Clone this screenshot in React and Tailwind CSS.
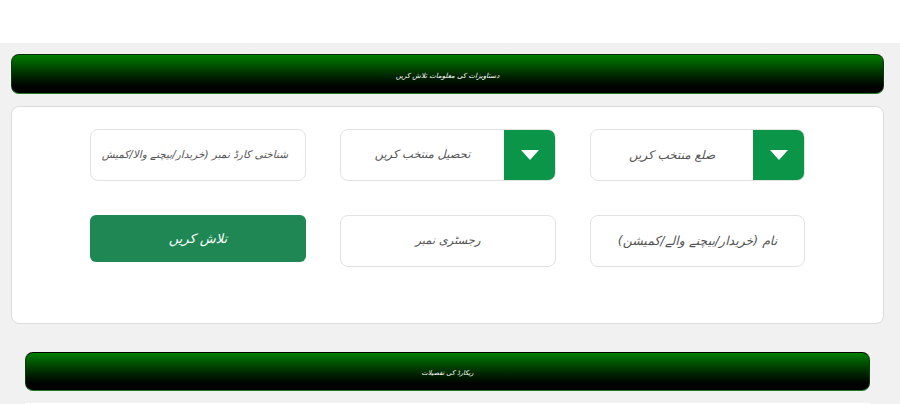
const font = { fontFamily: '"DejaVu Sans", sans-serif' };

function Bar({ children, className }) {
  return (
    <div className={`flex items-center justify-center rounded-lg border border-x-[#0b3d0b] border-b-[#1f7a2a] bg-gradient-to-b from-[#008000] to-black pt-1 italic text-white ${className}`}>
      {children}
    </div>
  );
}

function Select({ label, size }) {
  return (
    <div className="flex h-[52px] overflow-hidden rounded-lg border border-[#e2e2e2] bg-white">
      <div className={`flex flex-1 items-center justify-center italic text-[#555] ${size}`}>{label}</div>
      <div className="flex w-[51px] items-center justify-center bg-[#0a9548]">
        <div className="h-0 w-0 border-x-[9px] border-t-[10px] border-x-transparent border-t-white" />
      </div>
    </div>
  );
}

function Field({ label, size }) {
  return (
    <div className={`flex h-[52px] items-center justify-center overflow-hidden whitespace-nowrap rounded-lg border border-[#e2e2e2] bg-white italic text-[#555] ${size}`}>
      {label}
    </div>
  );
}

export default function App() {
  return (
    <div className="h-[404px] overflow-hidden bg-white" style={font}>
      <div className="mt-[43px] h-[361px] bg-[#f1f1f1] pl-[11px] pr-4 pt-[11px]">
        <Bar className="h-10 border-t-[#0a2a0a] text-[7px]">دستاویزات کی معلومات تلاش کریں</Bar>
        <div className="mt-3 h-[218px] rounded-lg border border-[#dcdcdc] bg-white px-[78px] pt-[22px]">
          <div className="grid grid-cols-[216px_216px_215px] items-start justify-between gap-y-[34px]">
            <div dir="rtl" className="flex h-[52px] items-center whitespace-nowrap rounded-lg border border-[#e2e2e2] bg-white px-[17px] text-[10.5px] italic text-[#555]">
              شناختی کارڈ نمبر (خریدار/بیچنے والا/کمیش
            </div>
            <Select label="تحصیل منتخب کریں" size="text-[11.5px]" />
            <Select label="ضلع منتخب کریں" size="text-[12px]" />
            <button className="flex h-[47px] items-center justify-center rounded-md bg-[#1e8753] text-[13px] italic text-white">تلاش کریں</button>
            <Field label="رجسٹری نمبر" size="text-[11.5px]" />
            <Field label="نام (خریدار/بیچنے والے/کمیشن)" size="text-[12.5px]" />
          </div>
        </div>
        <div className="px-[14px]">
          <Bar className="mt-7 h-[39px] border-t-black text-[6.5px]">ریکارڈ کی تفصیلات</Bar>
          <div className="mt-3 h-8 bg-white" />
        </div>
      </div>
    </div>
  );
}
